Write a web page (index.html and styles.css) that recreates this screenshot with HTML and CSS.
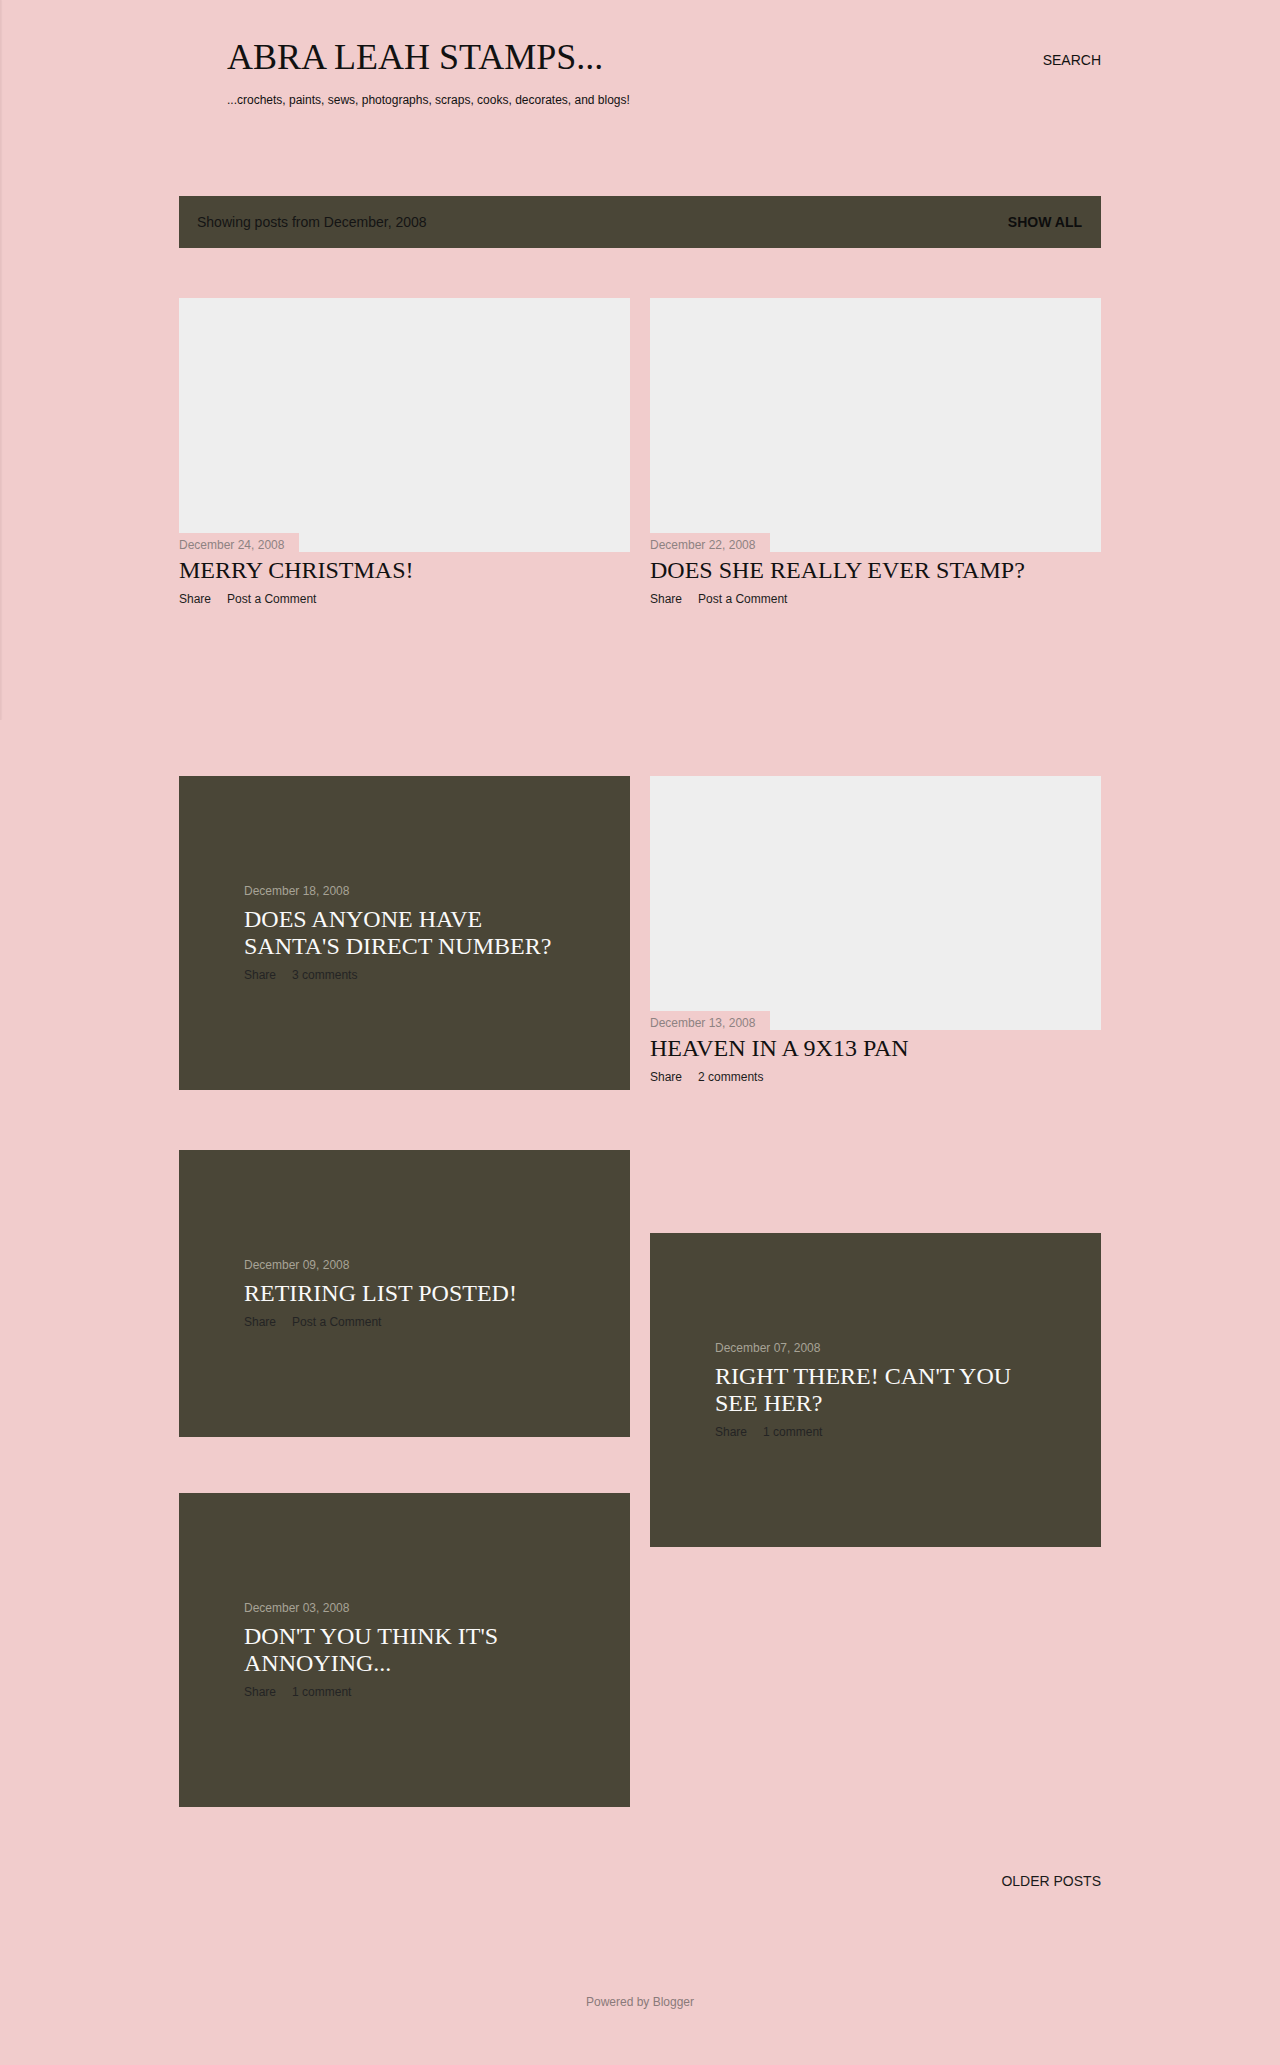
FILE: index.html
```html
<!DOCTYPE html>
<html lang="en">
<head>
<meta charset="utf-8">
<title>ABRA LEAH STAMPS...</title>
<link rel="stylesheet" href="styles.css">
</head>
<body>
<div class="drawer-edge"></div>
<div class="page">
  <header class="header">
    <div class="brand">
      <h1 class="site-title">ABRA LEAH STAMPS...</h1>
      <p class="site-desc">...crochets, paints, sews, photographs, scraps, cooks, decorates, and blogs!</p>
    </div>
    <a class="search-link">SEARCH</a>
  </header>

  <div class="filter-bar">
    <span class="filter-text">Showing posts from December, 2008</span>
    <a class="show-all">SHOW ALL</a>
  </div>

  <main class="posts">
    <div class="col">
      <article class="post post-image gap-a">
        <div class="thumb"></div>
        <div class="date-tab">December 24, 2008</div>
        <h2 class="post-title">MERRY CHRISTMAS!</h2>
        <div class="post-footer"><span>Share</span><span>Post a Comment</span></div>
      </article>
      <article class="post post-dark gap-c">
        <div class="date">December 18, 2008</div>
        <h2 class="post-title">DOES ANYONE HAVE SANTA'S DIRECT NUMBER?</h2>
        <div class="post-footer"><span>Share</span><span>3 comments</span></div>
      </article>
      <article class="post post-dark gap-e">
        <div class="date">December 09, 2008</div>
        <h2 class="post-title">RETIRING LIST POSTED!</h2>
        <div class="post-footer"><span>Share</span><span>Post a Comment</span></div>
      </article>
      <article class="post post-dark">
        <div class="date">December 03, 2008</div>
        <h2 class="post-title">DON'T YOU THINK IT'S ANNOYING...</h2>
        <div class="post-footer"><span>Share</span><span>1 comment</span></div>
      </article>
    </div>
    <div class="col">
      <article class="post post-image gap-a">
        <div class="thumb"></div>
        <div class="date-tab">December 22, 2008</div>
        <h2 class="post-title">DOES SHE REALLY EVER STAMP?</h2>
        <div class="post-footer"><span>Share</span><span>Post a Comment</span></div>
      </article>
      <article class="post post-image gap-d">
        <div class="thumb"></div>
        <div class="date-tab">December 13, 2008</div>
        <h2 class="post-title">HEAVEN IN A 9X13 PAN</h2>
        <div class="post-footer"><span>Share</span><span>2 comments</span></div>
      </article>
      <article class="post post-dark">
        <div class="date">December 07, 2008</div>
        <h2 class="post-title">RIGHT THERE! CAN'T YOU SEE HER?</h2>
        <div class="post-footer"><span>Share</span><span>1 comment</span></div>
      </article>
    </div>
  </main>

  <nav class="pager"><a class="older">OLDER POSTS</a></nav>
  <footer class="footer">Powered by Blogger</footer>
</div>
</body>
</html>
```

FILE: styles.css
```css
html, body {
  margin: 0;
  padding: 0;
}
body {
  background: #f1cccc;
  font-family: "Liberation Sans", Arial, sans-serif;
  color: #1a1a1a;
  position: relative;
}
.drawer-edge {
  position: absolute;
  left: 0;
  top: 0;
  width: 1px;
  height: 720px;
  background: #e6c1c1;
  box-shadow: 1px 0 1px rgba(0, 0, 0, 0.04);
}
.page {
  width: 922px;
  margin: 0 auto;
  padding-bottom: 52px;
}
.header {
  display: flex;
  justify-content: space-between;
  align-items: flex-start;
  padding-top: 36px;
}
.brand {
  padding-left: 48px;
}
.site-title {
  margin: 0;
  font-family: "Liberation Serif", "Times New Roman", serif;
  font-weight: normal;
  font-size: 36px;
  line-height: 43px;
  color: #111;
}
.site-desc {
  margin: 13px 0 0;
  font-size: 12px;
  line-height: 17px;
  color: #111;
}
.search-link {
  margin-top: 14px;
  font-size: 14px;
  line-height: 20px;
  color: #111;
}
.filter-bar {
  margin-top: 87px;
  background: #4a4637;
  display: flex;
  justify-content: space-between;
  align-items: center;
  padding: 16px 19px 16px 18px;
  font-size: 14px;
  line-height: 20px;
}
.filter-text {
  color: #141414;
}
.show-all {
  font-weight: bold;
  color: #0d0d0d;
}
.posts {
  margin-top: 50px;
  display: grid;
  grid-template-columns: 451px 451px;
  column-gap: 20px;
  align-items: start;
}
.col {
  display: flex;
  flex-direction: column;
}
.post-title {
  margin: 0;
  font-family: "Liberation Serif", "Times New Roman", serif;
  font-weight: normal;
  font-size: 24px;
  line-height: 27px;
}
.post-footer {
  display: flex;
  gap: 16px;
  font-size: 12px;
  line-height: 17px;
  margin-top: 7px;
}
.thumb {
  height: 254px;
  background: #eeeeee;
}
.date-tab {
  align-self: flex-start;
  margin-top: -19px;
  width: 104px;
  padding: 5px 16px 0 0;
  height: 14px;
  background: #f1cccc;
  font-size: 12px;
  line-height: 15px;
  color: #8e8282;
  white-space: nowrap;
}
.post-image {
  display: flex;
  flex-direction: column;
}
.post-image .post-title {
  margin-top: 5px;
  color: #111;
}
.post-image .post-footer {
  color: #1c1c1c;
}
.post-dark {
  background: #4a4637;
  padding: 107px 64px 106px 65px;
}
.post-dark .date {
  font-size: 12px;
  line-height: 17px;
  color: #a7a396;
}
.post-dark .post-title {
  margin-top: 6px;
  color: #fafafa;
}
.post-dark .post-footer {
  color: #242424;
}
.gap-a { margin-bottom: 168px; }
.gap-c { margin-bottom: 60px; }
.gap-e { margin-bottom: 56px; }
.gap-d { margin-bottom: 147px; }
.pager {
  margin-top: 64px;
  display: flex;
  justify-content: flex-end;
  font-size: 14px;
  line-height: 20px;
}
.older {
  color: #1a1a1a;
}
.footer {
  margin-top: 103px;
  text-align: center;
  font-size: 12px;
  line-height: 17px;
  color: #8a7a7a;
}
```
